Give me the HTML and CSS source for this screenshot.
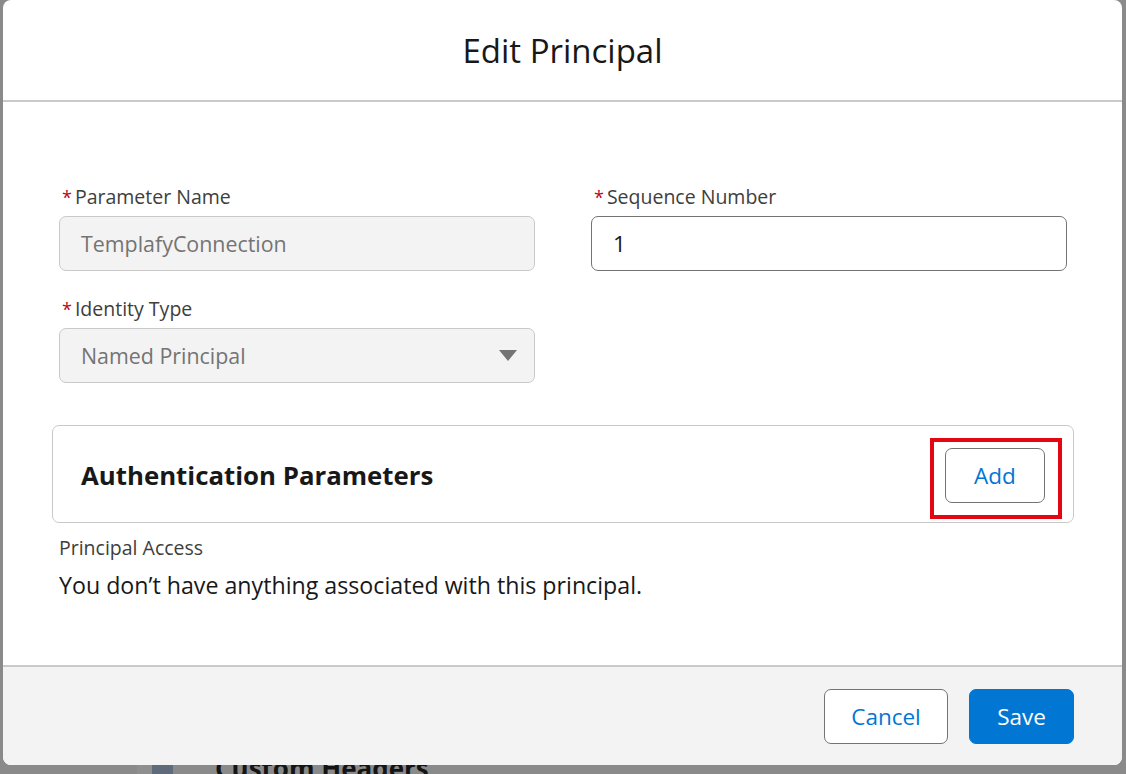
FILE: index.html
```html
<!DOCTYPE html>
<html lang="en">
<head>
<meta charset="utf-8">
<title>Edit Principal</title>
<link rel="stylesheet" href="styles.css">
</head>
<body>
<div class="under-page">
  <div class="under-heading">
    <span class="under-gutter"></span>
    <span class="under-icon"></span>
    <span class="under-title">Custom Headers</span>
  </div>
</div>
<section class="modal">
  <header class="modal-header">
    <h2 class="modal-title">Edit Principal</h2>
  </header>
  <div class="modal-body">
    <div class="form-grid">
      <div class="field">
        <label class="field-label"><abbr class="req">*</abbr>Parameter Name</label>
        <div class="input input-disabled">TemplafyConnection</div>
      </div>
      <div class="field">
        <label class="field-label"><abbr class="req">*</abbr>Sequence Number</label>
        <div class="input">1</div>
      </div>
      <div class="field">
        <label class="field-label"><abbr class="req">*</abbr>Identity Type</label>
        <div class="input input-disabled select">
          <span>Named Principal</span>
          <svg class="caret" width="18" height="12" viewBox="0 0 18 12"><path d="M0 0 H18 L9 11 Z" fill="#747474"/></svg>
        </div>
      </div>
    </div>
    <div class="card">
      <h3 class="card-title">Authentication Parameters</h3>
      <div class="highlight">
        <button class="btn btn-neutral">Add</button>
      </div>
    </div>
    <div class="access">
      <div class="access-label">Principal Access</div>
      <div class="access-text">You don’t have anything associated with this principal.</div>
    </div>
  </div>
  <footer class="modal-footer">
    <button class="btn btn-neutral btn-cancel">Cancel</button>
    <button class="btn btn-brand">Save</button>
  </footer>
</section>
</body>
</html>
```

FILE: styles.css
```css
* { box-sizing: border-box; }

html, body {
  margin: 0;
  padding: 0;
  width: 1126px;
  height: 774px;
  overflow: hidden;
}

body {
  background: #8a8a8a;
  font-family: "Open Sans", "Noto Sans", sans-serif;
  color: #181818;
  position: relative;
}

/* page underneath the modal (dimmed) */
.under-page {
  position: absolute;
  inset: 0;
  display: flex;
  flex-direction: column;
  justify-content: flex-end;
}

.under-heading {
  display: flex;
  align-items: flex-end;
  height: 30px;
  padding-left: 137px;
}

.under-gutter {
  width: 15px;
  height: 30px;
  background: #8f8f8f;
}

.under-icon {
  width: 21px;
  height: 30px;
  background: #5f6b7a;
}

.under-title {
  margin-left: 42px;
  font-weight: 700;
  font-size: 26px;
  line-height: 30px;
  color: #141414;
  transform: translateY(9px);
}

/* modal */
.modal {
  position: absolute;
  top: 0;
  left: 3px;
  width: 1119px;
  height: 765px;
  background: #fff;
  border-radius: 8px;
  display: flex;
  flex-direction: column;
  overflow: hidden;
}

.modal-header {
  height: 102px;
  border-bottom: 2px solid #c9c9c9;
  display: flex;
  align-items: center;
  justify-content: center;
  flex: none;
}

.modal-title {
  margin: 0;
  font-weight: 400;
  font-size: 33px;
  line-height: 44px;
  color: #181818;
  padding-top: 2px;
}

.modal-body {
  flex: 1;
  padding: 82px 48px 0 49px;
}

.form-grid {
  display: grid;
  grid-template-columns: 476px 476px;
  column-gap: 56px;
  row-gap: 25px;
  padding: 0 7px;
}

.field-label {
  display: block;
  font-size: 19.5px;
  line-height: 26px;
  color: #3e3e3c;
  margin-bottom: 6px;
}

.req {
  color: #ba0517;
  text-decoration: none;
  font-size: 18px;
  margin-right: 3px;
  margin-left: 3px;
}

.input {
  height: 55px;
  border: 1px solid #747474;
  border-radius: 7px;
  background: #fff;
  display: flex;
  align-items: center;
  padding: 0 21px;
  font-size: 22.5px;
  color: #181818;
}

.input-disabled {
  background: #f3f3f3;
  border-color: #c9c9c9;
  color: #747474;
  font-size: 21.4px;
}

.select {
  justify-content: space-between;
  padding-right: 17px;
}

.caret {
  display: block;
}

.card {
  margin-top: 42px;
  height: 98px;
  border: 1px solid #c9c9c9;
  border-radius: 7px;
  display: flex;
  align-items: center;
  justify-content: space-between;
  padding: 0 28px;
}

.card-title {
  margin: 0;
  font-size: 25.8px;
  font-weight: 700;
  color: #181818;
  padding-top: 2px;
}

.highlight {
  position: relative;
  margin-top: 2px;
}

.highlight::after {
  content: "";
  position: absolute;
  left: -15px;
  top: -10px;
  right: -17px;
  bottom: -16px;
  border: 4px solid #e30613;
  pointer-events: none;
}

.btn {
  font-family: inherit;
  height: 55px;
  border-radius: 7px;
  font-size: 22.5px;
  cursor: pointer;
  padding: 0;
}

.btn-neutral {
  background: #fff;
  border: 1px solid #747474;
  color: #0176d3;
  width: 100px;
}

.btn-cancel {
  width: 124px;
}

.btn-brand {
  background: #0176d3;
  border: 1px solid #0176d3;
  color: #fff;
  width: 105px;
}

.access {
  padding: 0 7px;
  margin-top: 12px;
}

.access-label {
  font-size: 19.5px;
  line-height: 26px;
  color: #3e3e3c;
}

.access-text {
  font-size: 23.2px;
  line-height: 30px;
  margin-top: 9px;
  color: #181818;
}

.modal-footer {
  flex: none;
  height: 100px;
  border-top: 2px solid #c9c9c9;
  background: #f3f3f3;
  display: flex;
  justify-content: flex-end;
  align-items: center;
  gap: 21px;
  padding: 0 48px 0 0;
}
```
